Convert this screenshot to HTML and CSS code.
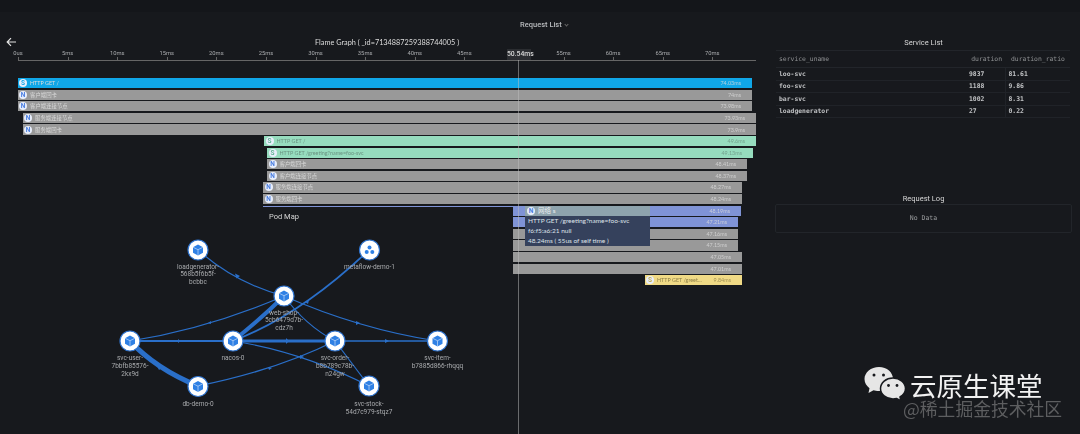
FILE: index.html
```html
<!DOCTYPE html>
<html lang="zh">
<head>
    <meta charset="UTF-8">
    <meta name="viewport" content="width=device-width, initial-scale=1.0">
    <title>Flame Graph</title>
    <link rel="stylesheet" href="styles.css">
</head>
<body>
    <div class="topbar"></div>
    <div class="request-list">Request List <span class="chevron"></span></div>

    <div class="content">
        <div class="flame">
            <div class="flame-head">
                <svg class="back" width="11" height="10" viewBox="0 0 11 10"><path d="M10 5H1.500M5 1.200 1.200 5 5 8.800" fill="none" stroke="#e4e4e4" stroke-width="1.200"/></svg>
                <span class="flame-title">Flame Graph ( _id=7134887259388744005 )</span>
            </div>
            <div class="axis">
                <div class="tick"><span>0us</span></div>
                <div class="tick"><span>5ms</span></div>
                <div class="tick"><span>10ms</span></div>
                <div class="tick"><span>15ms</span></div>
                <div class="tick"><span>20ms</span></div>
                <div class="tick"><span>25ms</span></div>
                <div class="tick"><span>30ms</span></div>
                <div class="tick"><span>35ms</span></div>
                <div class="tick"><span>40ms</span></div>
                <div class="tick"><span>45ms</span></div>
                <div class="tick tick-empty"></div>
                <div class="tick"><span>55ms</span></div>
                <div class="tick"><span>60ms</span></div>
                <div class="tick"><span>65ms</span></div>
                <div class="tick"><span>70ms</span></div>
            </div>

            <div class="bars">
                <div class="bar bar-blue" style="margin-left:17.5px;width:734.5px"><i class="badge">S</i><span>HTTP GET /</span><em>74.03ms</em></div>
                <div class="bar bar-gray" style="margin-left:17.5px;width:734.5px"><i class="badge">N</i><span>客户端回卡</span><em>74ms</em></div>
                <div class="bar bar-gray" style="margin-left:17.5px;width:734.5px"><i class="badge">N</i><span>客户端连接节点</span><em>73.98ms</em></div>
                <div class="bar bar-gray" style="margin-left:22.5px;width:733.5px"><i class="badge">N</i><span>服务端连接节点</span><em>73.93ms</em></div>
                <div class="bar bar-gray" style="margin-left:22.5px;width:733.5px"><i class="badge">N</i><span>服务端回卡</span><em>73.9ms</em></div>
                <div class="bar bar-green" style="margin-left:264px;width:492px"><i class="badge">S</i><span>HTTP GET /</span><em>49.6ms</em></div>
                <div class="bar bar-green" style="margin-left:267px;width:486px"><i class="badge">S</i><span>HTTP GET /greeting?name=foo-svc</span><em>49.13ms</em></div>
                <div class="bar bar-gray" style="margin-left:267px;width:480px"><i class="badge">N</i><span>客户端回卡</span><em>48.41ms</em></div>
                <div class="bar bar-gray" style="margin-left:267px;width:480px"><i class="badge">N</i><span>客户端连接节点</span><em>48.37ms</em></div>
                <div class="bar bar-gray" style="margin-left:263px;width:479px"><i class="badge">N</i><span>服务端连接节点</span><em>48.27ms</em></div>
                <div class="bar bar-gray" style="margin-left:263px;width:479px"><i class="badge">N</i><span>服务端回卡</span><em>48.24ms</em></div>
                <div class="bar bar-violet" style="margin-left:263px;width:478px"><span></span><em>48.19ms</em></div>
                <div class="bar bar-violet" style="margin-left:513px;width:225px"><span></span><em>47.21ms</em></div>
                <div class="bar bar-gray" style="margin-left:513px;width:225px"><span></span><em>47.16ms</em></div>
                <div class="bar bar-gray" style="margin-left:513px;width:225px"><span></span><em>47.15ms</em></div>
                <div class="bar bar-gray" style="margin-left:513px;width:229px"><span></span><em>47.05ms</em></div>
                <div class="bar bar-gray" style="margin-left:513px;width:229px"><span></span><em>47.01ms</em></div>
                <div class="bar bar-yellow" style="margin-left:644.5px;width:97.5px"><i class="badge">S</i><span>HTTP GET /greet...</span><em>9.84ms</em></div>
            </div>
        </div>

        <div class="side">
            <h3 class="side-title">Service List</h3>
            <table class="service-table">
                <thead>
                    <tr><th class="name">service_uname</th><th class="num">duration</th><th class="ratio">duration_ratio</th></tr>
                </thead>
                <tbody>
                    <tr><td>loo-svc</td><td class="count">9837</td><td>81.61</td></tr>
                    <tr><td>foo-svc</td><td class="count">1188</td><td>9.86</td></tr>
                    <tr><td>bar-svc</td><td class="count">1002</td><td>8.31</td></tr>
                    <tr><td>loadgenerator</td><td class="count">27</td><td>0.22</td></tr>
                </tbody>
            </table>
            <h3 class="side-title log-title">Request Log</h3>
            <div class="no-data">No Data</div>
        </div>
    </div>

    <!-- pod map sits on top of the flame graph rows -->
    <div class="pod-map">
        <div class="pod-title">Pod Map</div>
        <svg class="pod-svg" width="513" height="227" viewBox="0 207 513 227">
            <defs>
                <g id="cube">
                    <path d="M0-5.500 5-2.800V2.800L0 5.500-5 2.800V-2.800Z" fill="#2f80e4"/>
                    <path d="M-5-2.800 0-.3 5-2.800M0-.3V5.500" fill="none" stroke="#dbe9fb" stroke-width=".6"/>
                </g>
            </defs>
            <g fill="none" stroke="#2a6fc9">
                <path d="M198 250Q235 283 284 296" stroke-width="1.200"/>
                <path d="M369 250Q301 315 233 341" stroke-width="1.800"/>
                <path d="M284 296Q262 318 233 341" stroke-width="4"/>
                <path d="M284 296Q207 329 130 341" stroke-width="1.200"/>
                <path d="M130 341H233" stroke-width="2.200"/>
                <path d="M130 341Q156 369 198 386" stroke-width="5"/>
                <path d="M198 386Q277 370 335 341" stroke-width="1.300"/>
                <path d="M233 341H335" stroke-width="3"/>
                <path d="M335 341H437" stroke-width="1.600"/>
                <path d="M284 296Q359 329 437 341" stroke-width="1.200"/>
                <path d="M284 296Q305 325 335 341" stroke-width="1.200"/>
                <path d="M233 341Q303 352 369 386" stroke-width="1.200"/>
                <path d="M335 341 369 386" stroke-width="1.200"/>
            </g>
            <g fill="#2a6fc9">
                <path d="M235 273.500l5 2.500-3.500 2.500z"/>
                <path d="M305 302l4-2-1 4z"/>
                <path d="M356 321l4 2-4 2z"/>
                <path d="M178 339l2.500 2-2.500 2z"/>
                <path d="M155 362l8 5-4 3z"/>
                <path d="M268 367l4 1-3 2z"/>
                <path d="M385 339l4 2-4 2z"/>
                <path d="M286 338l3 3-3 3z"/>
                <path d="M208 323l3-2v3z"/>
                <path d="M300 355l4 2-4 2z"/>
            </g>
            <g class="pod-nodes">
                <g transform="translate(198 250)"><circle r="10"/><use href="#cube"/></g>
                <g transform="translate(284 296)"><circle r="10"/><use href="#cube"/></g>
                <g transform="translate(369.500 250)"><circle r="10"/><circle class="dot" cy="-2.500" r="2"/><circle class="dot" cx="-2.800" cy="2" r="2"/><circle class="dot" cx="2.800" cy="2" r="2"/></g>
                <g transform="translate(130 341)"><circle r="10"/><use href="#cube"/></g>
                <g transform="translate(233 341)"><circle r="10"/><use href="#cube"/></g>
                <g transform="translate(335 341)"><circle r="10"/><use href="#cube"/></g>
                <g transform="translate(437.500 341)"><circle r="10"/><use href="#cube"/></g>
                <g transform="translate(198 386.500)"><circle r="10"/><use href="#cube"/></g>
                <g transform="translate(369 386)"><circle r="10"/><use href="#cube"/></g>
            </g>
            <g class="pod-labels">
                <text x="198" y="268.500">loadgenerator-</text><text x="198" y="276">568b5f6b5f-</text><text x="198" y="283.500">bcbbc</text>
                <text x="284" y="314.500">web-shop-</text><text x="284" y="322">5cb6479d7b-</text><text x="284" y="329.500">cdz7h</text>
                <text x="369.500" y="269">metaflow-demo-1</text>
                <text x="130" y="360">svc-user-</text><text x="130" y="367.500">7bbfb85576-</text><text x="130" y="375.500">2kx9d</text>
                <text x="233" y="360">nacos-0</text>
                <text x="335" y="360">svc-order-</text><text x="335" y="367.500">b8b789c78b-</text><text x="335" y="375.500">n24gw</text>
                <text x="437.500" y="360">svc-item-</text><text x="437.500" y="367.500">b7885d866-rhqqq</text>
                <text x="198" y="406">db-demo-0</text>
                <text x="369" y="406">svc-stock-</text><text x="369" y="413.500">54d7c979-stqz7</text>
            </g>
        </svg>
    </div>

    <div class="cursor"></div>
    <div class="cursor-label">50.54ms</div>

    <div class="tooltip">
        <div class="tooltip-head"><i class="badge">N</i>网络 s</div>
        <div>HTTP GET /greeting?name=foo-svc</div>
        <div>f6:f5:a6:21 null</div>
        <div>48.24ms ( 55us of self time )</div>
    </div>

    <div class="watermark">
        <svg class="wechat" width="44" height="36" viewBox="0 0 44 36">
            <path d="M15 1C7 1 .5 6.500 .5 13c0 3.800 2 7 5 9.200L4.500 27l5-2.800c1.500.5 3.200.8 5.500.8 8 0 14-5.500 14-12S23 1 15 1Z" fill="#e6e6e6"/>
            <path d="M29 12c-7 0-12.500 4.800-12.500 10.500S22 33 29 33c1.300 0 2.500-.2 3.700-.5L37 35l-1-4c3.300-2 5.500-5 5.500-8.500C41.500 16.800 36 12 29 12Z" fill="#e6e6e6" stroke="#17191d" stroke-width="1.500"/>
            <g fill="#17191d"><circle cx="10" cy="9" r="1.500"/><circle cx="19.500" cy="9" r="1.500"/><circle cx="24.500" cy="19.500" r="1.400"/><circle cx="33" cy="19.500" r="1.400"/></g>
        </svg>
        <div class="wm-name">云原生课堂</div>
        <div class="wm-site">@稀土掘金技术社区</div>
    </div>
</body>
</html>
```

FILE: styles.css
```css
body {
    margin: 0;
    width: 1080px;
    height: 434px;
    overflow: hidden;
    position: relative;
    background-color: #17191d;
    color: #ddd;
    font-family: Lato, "Noto Sans CJK SC", sans-serif;
    filter: blur(0.35px);
}
.topbar {
    height: 12px;
    background-color: #14161a;
}
.request-list {
    height: 24px;
    padding-top: 8px;
    box-sizing: border-box;
    padding-left: 520px;
    font-family: Roboto, sans-serif;
    font-size: 7.5px;
    line-height: 9px;
    font-weight: 500;
    color: #b9bbbe;
}
.chevron {
    display: inline-block;
    width: 2px;
    height: 2px;
    margin: 0 0 1.500px 1.500px;
    border-right: 1px solid #666;
    border-bottom: 1px solid #666;
    transform: rotate(45deg);
}
.content {
    display: flex;
}
.flame {
    width: 775px;
}
.flame-head {
    height: 12px;
    display: flex;
    align-items: center;
    position: relative;
    padding-left: 315px;
}
.back {
    position: absolute;
    left: 6px;
    top: 1px;
}
.flame-title {
    font-size: 7.300px;
    color: #ddd;
    white-space: nowrap;
}
.axis {
    display: flex;
    margin-top: 1px;
    margin-left: 18px;
    width: 738px;
    height: 11px;
    border-bottom: 1px solid #666;
}
.tick {
    flex: 0 0 49.600px;
    position: relative;
    font-family: Roboto, sans-serif;
    font-size: 5.800px;
    line-height: 8px;
    color: #a9abae;
}
.tick span {
    display: inline-block;
    transform: translateX(-50%);
}
.tick::after {
    content: "";
    position: absolute;
    left: 0;
    bottom: 0;
    width: 1px;
    height: 3px;
    background-color: #666;
}
.tick-empty::after {
    display: none;
}
.bars {
    margin-top: 17px;
    display: flex;
    flex-direction: column;
    gap: 1.300px;
}
.bar {
    height: 10.300px;
    display: flex;
    align-items: center;
    padding: 0 11px 0 1.500px;
    box-sizing: border-box;
    font-size: 5.400px;
    color: #dcdcdc;
    overflow: hidden;
    white-space: nowrap;
}
.bar span {
    flex: 1;
    overflow: hidden;
}
.bar em {
    font-style: normal;
    opacity: 0.8;
}
.badge {
    flex: none;
    width: 8px;
    height: 8px;
    margin-right: 3px;
    border-radius: 50%;
    background-color: #e8eefc;
    color: #4a7ee0;
    font-family: Roboto, sans-serif;
    font-size: 6.500px;
    line-height: 8px;
    font-style: normal;
    font-weight: 700;
    text-align: center;
}
.bar-blue {
    background-color: #10a7e8;
}
.bar-blue .badge {
    color: #10a7e8;
}
.bar-gray {
    background-color: #999;
}
.bar-green {
    background-color: #96dcbe;
    color: #6a9482;
}
.bar-green .badge {
    color: #62b494;
}
.bar-violet {
    background-color: #7f93d6;
}
.bar-yellow {
    background-color: #f0da86;
    color: #8f8048;
}
.bar-yellow .badge {
    color: #c4ad50;
}
.side {
    width: 297px;
}
.side-title {
    margin: 0;
    height: 14px;
    font-family: Roboto, sans-serif;
    font-size: 7.500px;
    line-height: 14px;
    font-weight: 400;
    text-align: center;
    color: #d6d6d6;
}
.service-table {
    width: 294px;
    margin-left: 1px;
    table-layout: fixed;
    border-collapse: collapse;
    font-family: "DejaVu Sans Mono", monospace;
    font-size: 6.400px;
}
.service-table th {
    box-sizing: border-box;
    height: 17px;
    padding: 0 3px;
    text-align: left;
    font-weight: 400;
    color: #8f9193;
    border-top: 1px solid #22252a;
    border-bottom: 1px solid #22252a;
}
.service-table th.name {
    width: 190px;
}
.service-table th.num {
    width: 39px;
    text-align: right;
}
.service-table th.ratio {
    width: 65px;
    padding-left: 6px;
    white-space: nowrap;
}
.service-table td {
    box-sizing: border-box;
    height: 12.500px;
    padding: 0 3px;
    font-weight: 700;
    color: #c0c2c4;
    border-bottom: 1px solid #202328;
}
.service-table td.count {
    border-right: 1px solid #202328;
}
.log-title {
    margin-top: 72px;
    line-height: 18px;
}
.no-data {
    height: 29px;
    box-sizing: border-box;
    border: 1px solid #22252a;
    border-radius: 2px;
    font-family: "DejaVu Sans Mono", monospace;
    font-size: 6.500px;
    line-height: 27px;
    text-align: center;
    color: #9a9c9e;
}
.pod-map {
    position: absolute;
    left: 0;
    top: 207px;
    width: 513px;
    height: 227px;
    background-color: #17191d;
}
.pod-title {
    position: absolute;
    left: 0;
    width: 568px;
    top: 5px;
    font-family: Roboto, sans-serif;
    font-size: 7.500px;
    line-height: 10px;
    text-align: center;
    color: #d6d6d6;
}
.pod-svg {
    display: block;
}
.pod-nodes > g > circle:first-child {
    fill: #fff;
    stroke: #2f74d0;
    stroke-width: 1.200;
}
.pod-nodes .dot {
    fill: #2f80e4;
}
.pod-labels text {
    font-family: Roboto, sans-serif;
    font-size: 6.500px;
    text-anchor: middle;
    fill: #a9abae;
}
.cursor {
    position: absolute;
    left: 518px;
    top: 60px;
    bottom: 0;
    width: 1px;
    background-color: rgba(190, 190, 190, 0.5);
}
.cursor-label {
    position: absolute;
    left: 507px;
    top: 49px;
    width: 24px;
    height: 11px;
    background-color: #2b2d31;
    font-family: Roboto, sans-serif;
    font-size: 6.800px;
    font-weight: 500;
    line-height: 11px;
    text-align: center;
    color: #d8d8d8;
}
.tooltip {
    position: absolute;
    left: 525px;
    top: 206px;
    width: 125px;
    height: 40px;
    background-color: #35415c;
    font-size: 6.500px;
    line-height: 9.800px;
    color: #dfe3ea;
    padding: 0 3px;
    box-sizing: border-box;
    white-space: nowrap;
}
.tooltip-head {
    display: flex;
    align-items: center;
    margin: 0 -3px;
    padding: 0 2px;
    height: 10px;
    background-color: #8ea3ad;
    color: #eef1f3;
}
.watermark {
    position: absolute;
    left: 864px;
    top: 366px;
    width: 210px;
    height: 60px;
}
.wechat {
    position: absolute;
    left: 0;
    top: 0;
}
.wm-name {
    position: absolute;
    left: 46px;
    top: 6px;
    font-family: "Noto Sans CJK SC", sans-serif;
    font-size: 26.500px;
    line-height: 26px;
    color: #f2f2f2;
    white-space: nowrap;
}
.wm-site {
    position: absolute;
    left: 39px;
    top: 33px;
    font-family: "Noto Sans CJK SC", sans-serif;
    font-size: 17.800px;
    line-height: 18px;
    color: #5d5e60;
    white-space: nowrap;
}
```
